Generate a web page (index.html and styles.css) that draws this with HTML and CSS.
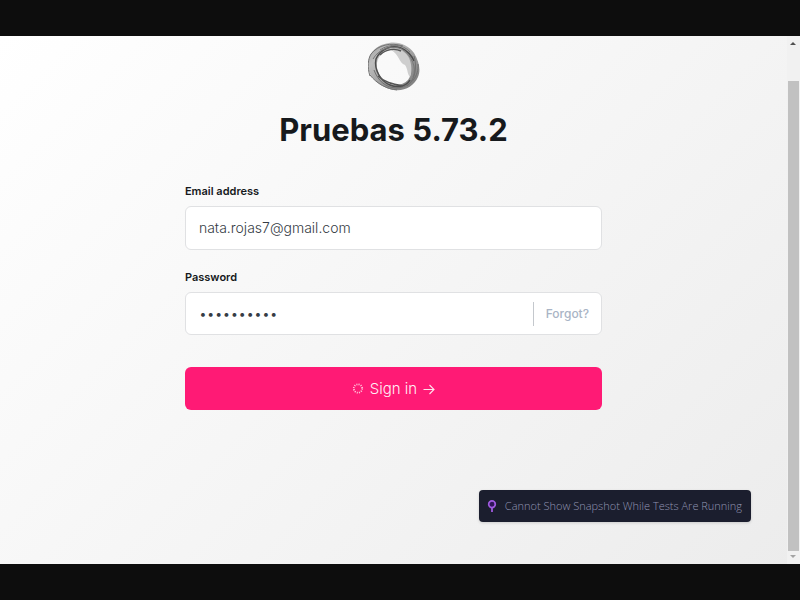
FILE: index.html
```
<!DOCTYPE html>
<html lang="en">
<head>
<meta charset="utf-8">
<title>Sign in</title>
<link rel="stylesheet" href="styles.css">
</head>
<body>
<div class="viewport">
  <main class="page">
    <svg class="logo" viewBox="0 0 52 50" aria-hidden="true">
      <defs>
        <linearGradient id="ring" x1="0" y1="0" x2="1" y2="1">
          <stop offset="0" stop-color="#999"/>
          <stop offset=".25" stop-color="#bebebe"/>
          <stop offset=".6" stop-color="#999"/>
          <stop offset="1" stop-color="#777"/>
        </linearGradient>
      </defs>
      <path fill="url(#ring)" fill-rule="evenodd" d="M21 1C31-1 41 4 46 11C51 19 53 28 50 35C46 44 37 49 27 48C17 47 9 41 4 35C-1 29-1 19 3 12C7 5 14 2 21 1ZM24 8C16 8 10 14 9 21C8 30 13 37 19 41C27 45 35 43 40 38C43 34 43 30 43 26C41 20 38 16 34 12C31 9 28 8 24 8Z"/>
      <path fill="#cecece" d="M23 8C30 5 38 10 41 16C44 22 44 31 42 35C39 32 40 27 37 23C31 21 31 12 23 8Z"/>
      <g fill="none">
        <path stroke="#4d4d4d" stroke-width="1.5" d="M8 17C13 6 24 3 33 6C39 8 44 14 46 19M8 17C6 27 12 39 22 43C29 46 38 45 42 38"/>
        <path stroke="#777" stroke-width="1" d="M5 17C11 6 25 3 34 7C44 14 49 26 45 35M12 8C22 1 35 2 42 10"/>
        <path stroke="#707070" stroke-width="1" d="M2 34C-1 25 0 17 3 12C10 3 23 0 35 4M50 22C51 34 43 45 29 46C18 46 10 39 6 28M2 33C9 42 19 47 29 48M46 14C49 24 48 37 39 44"/>
        <path stroke="#555" stroke-width="1.4" d="M10 34C16 40 24 42 35 44M12 13C18 7 27 6 33 9"/>
      </g>
    </svg>
    <h1 class="title">Pruebas 5.73.2</h1>
    <form class="form">
      <div class="field">
        <label class="label" for="email">Email address</label>
        <div class="control"><input class="input" id="email" type="email" value="nata.rojas7@gmail.com"></div>
      </div>
      <div class="field">
        <label class="label" for="password">Password</label>
        <div class="control control-password">
          <input class="input" id="password" type="password" value="contrasena">
          <a class="forgot" href="#">Forgot?</a>
        </div>
      </div>
      <button class="submit" type="button">
        <svg class="spinner" viewBox="0 0 12 12" aria-hidden="true"><circle cx="6" cy="5.5" r="4.2" fill="none" stroke="#ffc4da" stroke-width="1.8" stroke-dasharray="1.1 1.1"/></svg>
        <span>Sign in</span>
        <svg class="arrow" viewBox="0 0 12 12" aria-hidden="true"><path d="M0.5 6.5H11M6.5 2L11 6.5L6.5 11" fill="none" stroke="#ffe3ed" stroke-width="1.1"/></svg>
      </button>
    </form>
    <div class="notice" role="status">
      <svg class="pin" viewBox="0 0 10 12" aria-hidden="true"><path d="M5 7V12" stroke="#a05ae0" stroke-width="1.8"/><circle cx="5" cy="4.2" r="3.3" fill="#30145a" stroke="#a05ae0" stroke-width="1.7"/></svg>
      <span>Cannot Show Snapshot While Tests Are Running</span>
    </div>
  </main>
  <div class="scrollbar" aria-hidden="true">
    <svg class="scroll-arrow" viewBox="0 0 6 3"><path d="M3 0L6 3H0Z" fill="#505050"/></svg>
    <div class="thumb"></div>
    <svg class="scroll-arrow" viewBox="0 0 6 3"><path d="M0 0H6L3 3Z" fill="#a3a3a3"/></svg>
  </div>
</div>
</body>
</html>
```
FILE: styles.css
```
* { box-sizing: border-box; }

body {
  margin: 0;
  min-height: 100vh;
  padding: 36px 0;
  display: flex;
  background: #0d0d0d;
  color: #16191c;
  font-family: Inter, "Liberation Sans", sans-serif;
}

.viewport {
  flex: 1;
  display: flex;
  background: linear-gradient(135deg, #fff, #ececec);
}

.page {
  position: relative;
  flex: 1;
  display: flex;
  flex-direction: column;
  align-items: center;
  padding-top: 6px;
}

.logo { width: 52px; height: 50px; }

.title {
  margin: 18px 0 32px;
  font-size: 31px;
  line-height: 40px;
  font-weight: 700;
}

.form {
  width: 53%;
  min-width: 280px;
  display: flex;
  flex-direction: column;
}

.field { margin-bottom: 18px; }

.label {
  display: block;
  margin-bottom: 6px;
  font-size: 11px;
  line-height: 18px;
  font-weight: 600;
}

.control {
  display: flex;
  align-items: center;
  height: 44px;
  background: #fff;
  border: 1px solid #e0e1e3;
  border-radius: 6px;
}

.control-password { height: 43px; }

.input {
  flex: 1;
  min-width: 0;
  border: 0;
  outline: 0;
  padding: 0 13px;
  background: transparent;
  color: #363c45;
  font: 300 14px/20px Inter, "Liberation Sans", sans-serif;
}

.forgot {
  padding: 0 12px;
  border-left: 1px solid #c4c8cd;
  color: #a9b4c5;
  font-size: 12px;
  line-height: 24px;
  font-weight: 500;
  text-decoration: none;
}

.submit {
  display: flex;
  align-items: center;
  justify-content: center;
  gap: 6px;
  height: 43px;
  margin-top: 14px;
  padding: 0;
  border: 0;
  border-radius: 6px;
  background: #ff1a75;
  color: #fff0f5;
  font: 300 15px/20px Inter, "Liberation Sans", sans-serif;
}

.spinner,
.arrow { width: 12px; height: 12px; }

.notice {
  position: absolute;
  right: 36px;
  bottom: 42px;
  display: flex;
  align-items: center;
  gap: 8px;
  height: 32px;
  padding: 0 9px 0 8px;
  border-radius: 4px;
  background: #1b1e2e;
  box-shadow: 0 1px 3px rgba(0, 0, 0, .15);
  color: #9295b2;
  font: 300 11px/16px "Open Sans", "Noto Sans", sans-serif;
  white-space: nowrap;
}

.pin { width: 10px; height: 12px; }

.scrollbar {
  width: 13px;
  display: flex;
  flex-direction: column;
  align-items: center;
  padding: 6px 1px 6px 0;
  background: #f1f1f1;
}

.scroll-arrow { width: 6px; height: 3px; }

.thumb {
  flex: 1;
  width: 11px;
  margin: 36px 0 4px;
  background: #c1c1c1;
}
```
